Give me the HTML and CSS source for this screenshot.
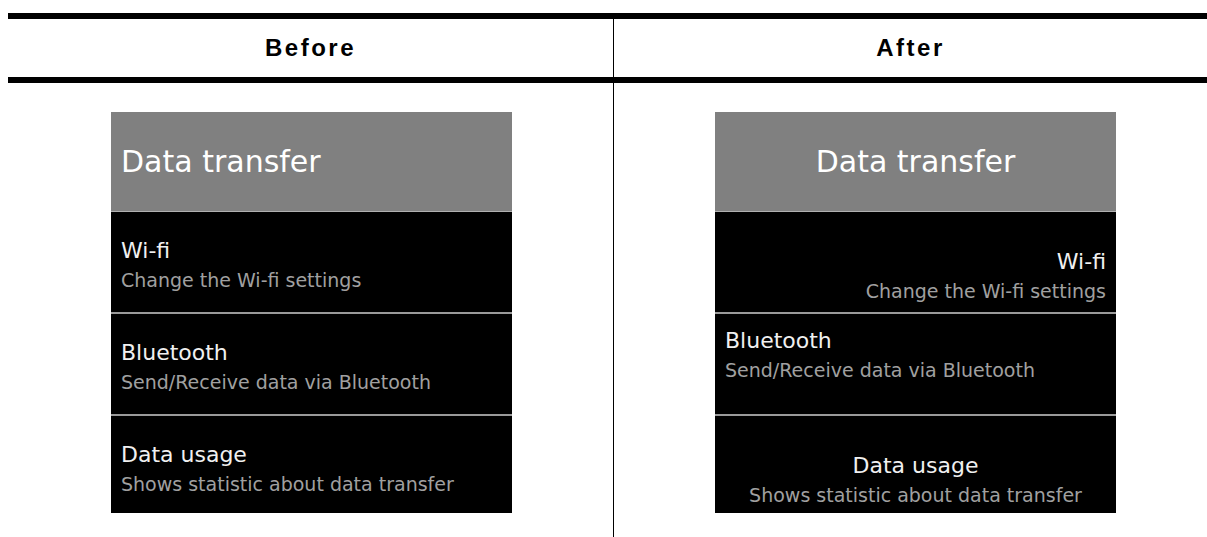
FILE: index.html
```html
<!DOCTYPE html>
<html lang="en">
<head>
  <meta charset="UTF-8">
  <meta name="viewport" content="width=device-width, initial-scale=1.0">
  <title>Before / After</title>
  <link rel="stylesheet" href="styles.css">
</head>
<body>
  <div class="compare">
    <div class="col-head">Before</div>
    <div class="col-head col-right">After</div>

    <div class="col-body">
      <div class="panel">
        <div class="panel-title">Data transfer</div>
        <div class="item">
          <div class="item-name">Wi-fi</div>
          <div class="item-sub">Change the Wi-fi settings</div>
        </div>
        <div class="item">
          <div class="item-name">Bluetooth</div>
          <div class="item-sub">Send/Receive data via Bluetooth</div>
        </div>
        <div class="item">
          <div class="item-name">Data usage</div>
          <div class="item-sub">Shows statistic about data transfer</div>
        </div>
      </div>
    </div>

    <div class="col-body col-right">
      <div class="panel">
        <div class="panel-title center">Data transfer</div>
        <div class="item bottom right">
          <div class="item-name">Wi-fi</div>
          <div class="item-sub">Change the Wi-fi settings</div>
        </div>
        <div class="item top">
          <div class="item-name">Bluetooth</div>
          <div class="item-sub">Send/Receive data via Bluetooth</div>
        </div>
        <div class="item bottom center">
          <div class="item-name">Data usage</div>
          <div class="item-sub">Shows statistic about data transfer</div>
        </div>
      </div>
    </div>
  </div>
</body>
</html>
```

FILE: styles.css
```css
body {
  margin: 0;
  padding: 13px 0 0 8px;
  background-color: #fff;
  font-family: "DejaVu Sans", sans-serif;
  overflow: hidden;
}

.compare {
  display: grid;
  grid-template-columns: 605px 594px;
  border-top: 6px solid #000;
}

.col-head {
  height: 58px;
  border-bottom: 6px solid #000;
  display: flex;
  align-items: center;
  justify-content: center;
  font-family: "Liberation Sans", Arial, sans-serif;
  font-weight: bold;
  font-size: 24px;
  letter-spacing: 2.5px;
  color: #000;
}

.col-right {
  border-left: 1px solid #000;
}

.col-body {
  height: 454px;
  box-sizing: border-box;
  padding: 29px 0 0 103px;
}

.col-body.col-right {
  padding-left: 101px;
}

.panel {
  width: 401px;
  height: 401px;
  background-color: #000;
  overflow: hidden;
}

.panel-title {
  height: 99px;
  border-bottom: 1px solid #b0b0b0;
  background-color: #808080;
  color: #fff;
  font-size: 30px;
  display: flex;
  align-items: center;
  padding: 0 10px;
}

.panel-title.center {
  justify-content: center;
}

.item {
  height: 102px;
  box-sizing: border-box;
  border-bottom: 2px solid #9a9a9a;
  padding: 12px 10px 6px;
  display: flex;
  flex-direction: column;
  justify-content: center;
  align-items: flex-start;
}

.item.top {
  justify-content: flex-start;
}

.item.bottom {
  justify-content: flex-end;
}

.item.right {
  align-items: flex-end;
}

.item.center {
  align-items: center;
}

.item-name {
  color: #f0f0f0;
  font-size: 22px;
  line-height: 30px;
}

.item-sub {
  color: #a0a0a0;
  font-size: 19px;
  line-height: 29px;
}
```
